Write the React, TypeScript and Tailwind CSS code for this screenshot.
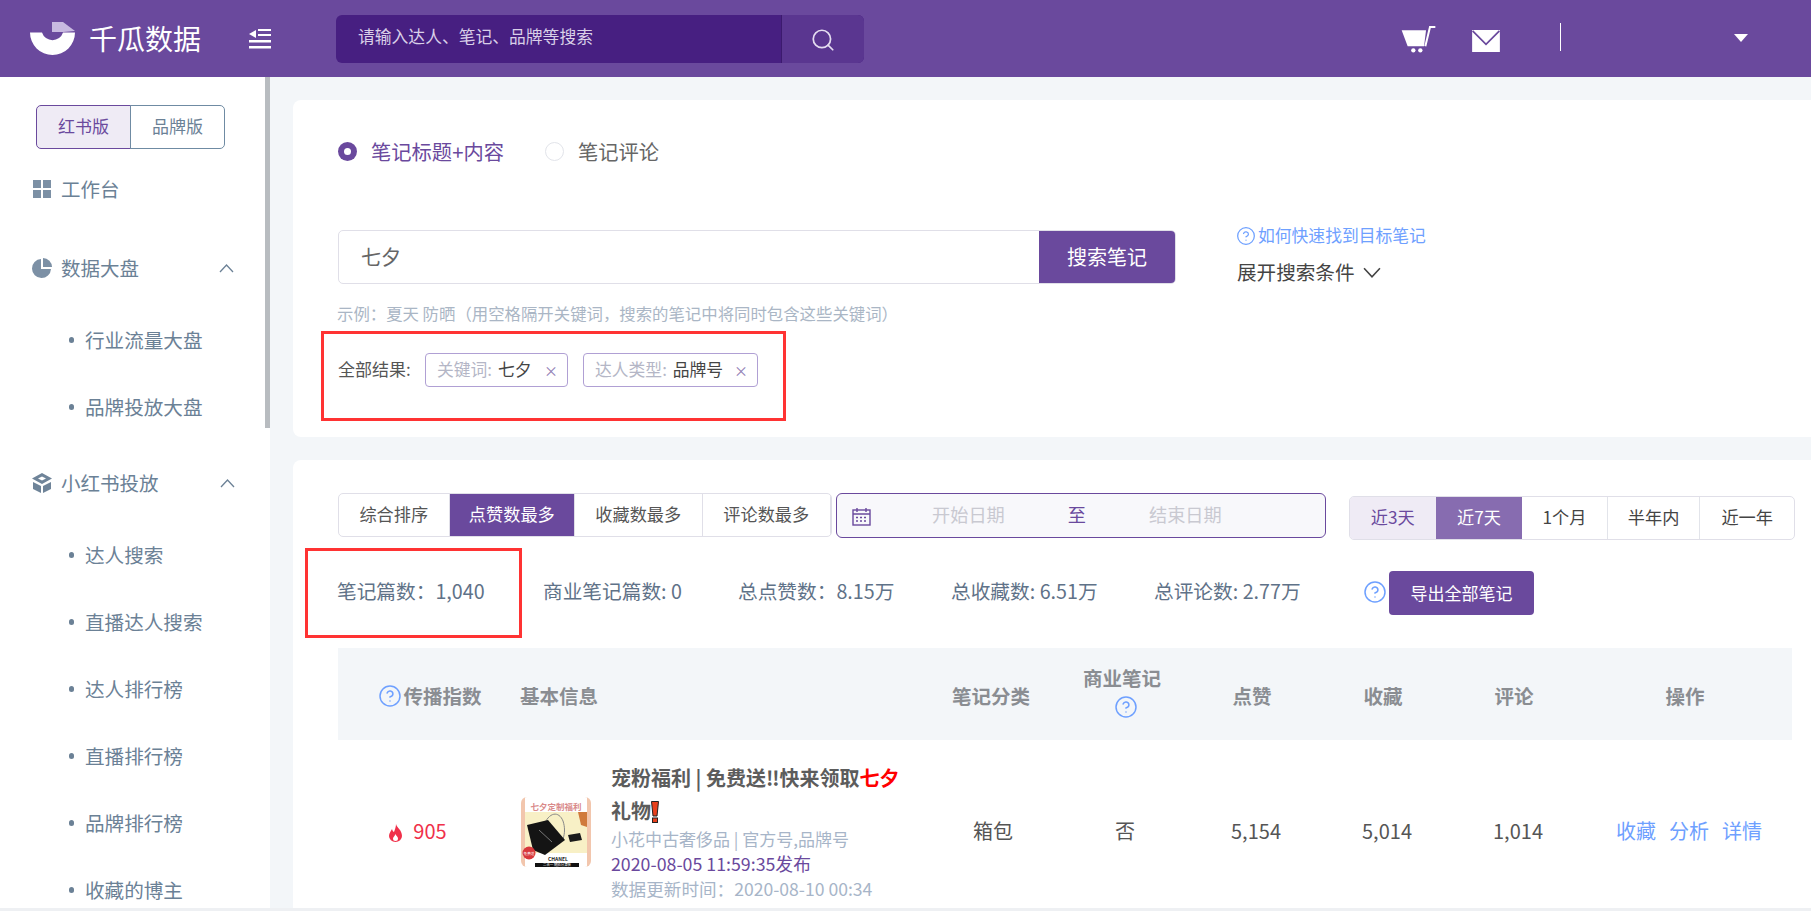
import { CircleHelp, Search } from "lucide-react";

const font = { fontFamily: '"Noto Sans CJK SC", "Noto Sans", sans-serif' };

export default function App() {
  return (
    <div style={font} className="flex h-[911px] w-full flex-col overflow-hidden bg-white">
      <Header />
      <div className="flex h-[831px] min-h-0">
        <Sidebar />
        <main className="flex min-w-0 flex-1 flex-col gap-[23px] overflow-hidden bg-[#f3f6f9] pl-[23px] pt-[23px]">
          <SearchCard />
          <ResultCard />
        </main>
      </div>
      <div className="h-[3px] bg-[#eef0f3]" />
    </div>
  );
}

function Header() {
  return (
    <header className="flex h-[77px] shrink-0 items-center bg-[#6a499d] pl-[30px] pr-[63px] text-white">
      <svg width="45" height="33" viewBox="0 0 45 33" className="mb-[1px]">
        <path d="M0 10.5 A22.5 22.5 0 0 0 45 10.5 L33 10.5 A11 11 0 0 1 12 10.5 Z" fill="#fff" />
        <path d="M22 0 L33 0 L45 9 L33 10 L22 10 Z" fill="#c8b9e0" />
      </svg>
      <span className="mb-[2px] ml-[14px] text-[28px] leading-none">千瓜数据</span>
      <svg width="22" height="20" viewBox="0 0 22 20" className="ml-[48px]" fill="#fff">
        <path d="M0 5 L7 1 L7 9 Z" />
        <rect x="9" y="0" width="13" height="2" />
        <rect x="9" y="5" width="13" height="2" />
        <rect x="0" y="11" width="22" height="2.5" />
        <rect x="0" y="17" width="22" height="2.5" />
      </svg>
      <div className="ml-[65px] flex h-[48px] w-[528px] overflow-hidden rounded-[6px] bg-[#471f81]">
        <div className="flex flex-1 items-center pb-[3px] pl-[22px] text-[16.8px] text-[#d9cfe8]">请输入达人、笔记、品牌等搜索</div>
        <div className="flex w-[83px] items-center justify-center border-l border-[#3c1a6e] bg-[#5a3690]">
          <Search size={26} strokeWidth={1.6} className="mt-[3px] text-[#e4dcf0]" />
        </div>
      </div>
      <div className="ml-auto flex items-center">
        <svg width="35" height="28" viewBox="30 36 105 84" fill="#fff" className="mt-[1px]">
          <path d="M32 52 L105 52 L99 100 L50 100 Z" />
          <path d="M103 100 L117 42 L133 42" fill="none" stroke="#fff" strokeWidth="6" />
          <circle cx="67" cy="112" r="6.5" />
          <circle cx="88" cy="112" r="6.5" />
        </svg>
        <svg width="28" height="22" viewBox="0 0 29 23" className="ml-[36px] mt-[5px]">
          <rect width="29" height="23" fill="#fff" />
          <path d="M0.5 1 L14.5 15 L28.5 1" fill="none" stroke="#6a499d" strokeWidth="1.8" />
        </svg>
        <div className="mb-[3px] ml-[60px] h-[28px] w-px bg-white" />
        <div className="mb-[2px] ml-[173px] h-0 w-0 border-x-[7.5px] border-t-[8px] border-x-transparent border-t-white" />
      </div>
    </header>
  );
}

function Chevron({ className }: { className?: string }) {
  return (
    <svg width="15" height="9" viewBox="0 0 15 9" className={className} fill="none" stroke="currentColor" strokeWidth="1.3">
      <path d="M1 8 L7.5 1 L14 8" />
    </svg>
  );
}

function SubItem({ label }: { label: string }) {
  return (
    <div className="flex h-[67px] items-center pl-[69px] text-[19.6px] text-[#6b8196]">
      <span className="mr-[11px] h-[6px] w-[5px] rounded-full bg-[#6b8196]" />
      {label}
    </div>
  );
}

function Sidebar() {
  return (
    <aside className="relative w-[270px] shrink-0 overflow-hidden bg-white pl-[32px] pt-[28px]">
      <div className="absolute right-0 top-0 h-[351px] w-[5px] bg-[#b8bcc0]" />
      <div className="ml-[4px] flex h-[44px] w-[189px] text-[17px]">
        <div className="flex w-[95px] items-center justify-center rounded-l-[5px] border border-[#6a499d] bg-[#efebf5] pb-[2px] text-[#6a499d]">红书版</div>
        <div className="-ml-px flex w-[95px] items-center justify-center rounded-r-[5px] border border-[#6f8ba3] pb-[2px] text-[#6b8196]">品牌版</div>
      </div>

      <div className="-ml-[32px] pl-[33px]">
        <div className="mt-[6.5px] flex h-[67px] items-center text-[19.5px] text-[#6b8196]">
          <div className="grid h-[18px] w-[18px] grid-cols-2 gap-[2px]">
            <span className="bg-[#7c90a5]" />
            <span className="bg-[#7c90a5]" />
            <span className="bg-[#7c90a5]" />
            <span className="bg-[#7c90a5]" />
          </div>
          <span className="ml-[10px]">工作台</span>
        </div>
        <div className="mt-[12px] flex h-[67px] items-center text-[19.5px] text-[#6b8196]">
          <svg width="20" height="20" viewBox="0 0 20 20" className="-ml-[1px]" fill="#7c90a5">
            <path d="M9 1 L9 11 L19 11 A9.5 9.5 0 1 1 9 1 Z" />
            <path d="M11 0 A9 9 0 0 1 20 9 L11 9 Z" />
          </svg>
          <span className="ml-[9px]">数据大盘</span>
          <Chevron className="ml-[80px] text-[#6b8196]" />
        </div>
      </div>
      <div className="-ml-[32px] mt-[5px]">
        <SubItem label="行业流量大盘" />
        <SubItem label="品牌投放大盘" />
      </div>
      <div className="-ml-[32px] mt-[9px] flex h-[67px] items-center pl-[31px] text-[19.5px] text-[#6b8196]">
        <svg width="22" height="22" viewBox="0 0 22 22" fill="#6f8499">
          <path
            fillRule="evenodd"
            d="M11 1 L21 6.5 L11 12 L1 6.5 Z M11 4.5 L7 6.5 L11 8.5 L15 6.5 Z"
          />
          <path d="M2 10 L10 14 L10 21 L2 17 Z" />
          <path d="M20 10 L12 14 L12 21 L20 17 Z" />
        </svg>
        <span className="ml-[8px]">小红书投放</span>
        <Chevron className="ml-[61px] text-[#6b8196]" />
      </div>
      <div className="-ml-[32px] mt-[5px]">
        <SubItem label="达人搜索" />
        <SubItem label="直播达人搜索" />
        <SubItem label="达人排行榜" />
        <SubItem label="直播排行榜" />
        <SubItem label="品牌排行榜" />
        <SubItem label="收藏的博主" />
      </div>
    </aside>
  );
}

function Tag({ label, value, width }: { label: string; value: string; width: string }) {
  return (
    <div className={`flex h-[34px] items-center whitespace-nowrap rounded-[4px] border border-[#b0a0d4] pl-[11px] text-[16.8px] ${width}`}>
      <span className="text-[#b4b6c6]">{label}</span>
      <span className="ml-[6px] text-[#444]">{value}</span>
      <span className="ml-auto mr-[9px] text-[14px] text-[#8f80b4]">×</span>
    </div>
  );
}

function SearchCard() {
  return (
    <section className="relative h-[337px] shrink-0 rounded-l-[8px] bg-white pl-[45px] pt-[35px]">
      <div className="flex h-[32px] items-center text-[20.3px]">
        <span className="mt-[1px] flex h-[19px] w-[19px] items-center justify-center rounded-full bg-[#6a499d]">
          <span className="h-[7px] w-[7px] rounded-full bg-white" />
        </span>
        <span className="ml-[14px] text-[#6a499d]">笔记标题+内容</span>
        <span className="ml-[41px] mt-[1px] h-[19px] w-[19px] rounded-full border border-[#e2e4ea]" />
        <span className="ml-[14px] text-[#666]">笔记评论</span>
      </div>

      <div className="mt-[63px] flex items-start">
        <div className="flex h-[54px] w-[838px] overflow-hidden rounded-[5px] border border-[#e0dfe8]">
          <div className="flex w-[700px] items-center pl-[22px] text-[20px] text-[#666]">七夕</div>
          <div className="flex flex-1 items-center justify-center bg-[#6a499d] text-[20px] text-white">搜索笔记</div>
        </div>
        <div className="-mt-[4px] ml-[61px]">
          <div className="flex h-[20px] items-center text-[16.8px] text-[#6ea0ff]">
            <CircleHelp size={20} strokeWidth={1.5} className="-ml-[1px]" />
            <span className="ml-[2px]">如何快速找到目标笔记</span>
          </div>
          <div className="mt-[12px] flex h-[28px] items-center text-[19.6px] text-[#444]">
            展开搜索条件
            <Chevron className="ml-[7px] mt-[1px] h-[11px] w-[20px] rotate-180 text-[#444]" />
          </div>
        </div>
      </div>

      <div className="-ml-[1px] mt-[14.5px] h-[24px] whitespace-nowrap text-[16.4px] leading-[24px] text-[#aab6c5]">
        示例：夏天 防晒（用空格隔开关键词，搜索的笔记中将同时包含这些关键词）
      </div>

      <div className="mt-[28.5px] flex items-center">
        <span className="w-[87px] pb-[2px] text-[17px] text-[#555]">全部结果:</span>
        <Tag label="关键词:" value="七夕" width="w-[143px]" />
        <div className="w-[15px]" />
        <Tag label="达人类型:" value="品牌号" width="w-[175px]" />
      </div>

      <div className="absolute left-[28px] top-[231px] h-[90px] w-[465px] border-[3px] border-[#f33]" />
    </section>
  );
}

const sortTabs = [
  { label: "综合排序", width: "w-[111px]", active: false },
  { label: "点赞数最多", width: "w-[126px]", active: true },
  { label: "收藏数最多", width: "w-[128px]", active: false },
  { label: "评论数最多", width: "w-[129px]", active: false },
];

const ranges = [
  { label: "近3天", width: "w-[86px]", cls: "bg-[#efebf5] text-[#6a499d]" },
  { label: "近7天", width: "w-[87px]", cls: "bg-[#876cb0] text-white" },
  { label: "1个月", width: "w-[86px]", cls: "border-r border-[#e2e4ea] text-[#444]" },
  { label: "半年内", width: "w-[93px]", cls: "border-r border-[#e2e4ea] text-[#444]" },
  { label: "近一年", width: "w-[94px]", cls: "text-[#444]" },
];

function Toolbar() {
  return (
    <div className="flex items-start text-[17.2px]">
      <div className="flex h-[44px] w-[494px] overflow-hidden rounded-[5px] border border-[#e0dfe8]">
        {sortTabs.map((t) => (
          <div
            key={t.label}
            className={`flex items-center justify-center border-r border-[#e0dfe8] pb-[2px] ${t.width} ${t.active ? "bg-[#6a499d] text-white" : "text-[#555]"}`}
          >
            {t.label}
          </div>
        ))}
      </div>
      <div className="ml-[4px] flex h-[45px] w-[490px] items-center rounded-[6px] border-[1.5px] border-[#6a499d] bg-[#f8f8fb] pl-[15px] text-[18.2px]">
        <svg width="19" height="19" viewBox="0 0 19 19" fill="none" stroke="#6a499d" strokeWidth="1.4" className="mt-[1px]">
          <rect x="1" y="3" width="17" height="15" />
          <path d="M1 7 H18 M5 1 V5 M14 1 V5" />
          <path d="M4 10.5 H7 M8 10.5 H11 M12 10.5 H15 M4 14 H7 M8 14 H11 M12 14 H15" strokeDasharray="2 1" />
        </svg>
        <span className="mb-[2px] ml-[61px] text-[#c9c9d1]">开始日期</span>
        <span className="mb-[2px] ml-[63px] text-[#6a499d]">至</span>
        <span className="mb-[2px] ml-[63px] text-[#c9c9d1]">结束日期</span>
      </div>
      <div className="ml-[23px] mt-[3px] flex h-[44px] w-[446px] overflow-hidden rounded-[5px] border border-[#e0dfe8]">
        {ranges.map((r) => (
          <div key={r.label} className={`flex items-center justify-center pb-[2px] ${r.width} ${r.cls}`}>
            {r.label}
          </div>
        ))}
      </div>
    </div>
  );
}

function Stats() {
  return (
    <div className="-ml-[1px] mt-[31px] flex h-[44px] items-center text-[19.7px] text-[#5f7288]">
      <span className="w-[206px] pb-[4px]">笔记篇数：1,040</span>
      <span className="w-[195px] pb-[4px]">商业笔记篇数: 0</span>
      <span className="w-[213px] pb-[4px]">总点赞数：8.15万</span>
      <span className="w-[203px] pb-[4px]">总收藏数: 6.51万</span>
      <span className="w-[209px] pb-[4px]">总评论数: 2.77万</span>
      <CircleHelp size={24} strokeWidth={1.5} className="mb-[2px] text-[#6ea0ff]" />
      <div className="ml-[2px] flex h-[44px] w-[145px] items-center justify-center rounded-[4px] bg-[#6a499d] pb-[1px] text-[17px] text-white">
        导出全部笔记
      </div>
    </div>
  );
}

const gridCols = "grid grid-cols-[182px_388px_166px_96px_164px_98px_164px_178px_18px]";

function TableHead() {
  return (
    <div className={`${gridCols} mt-[33px] h-[92px] w-[1454px] items-center bg-[#f3f6f9] pt-[4px] text-center text-[19.5px] font-bold text-[#8a8d92]`}>
      <div className="flex items-center justify-center pl-[2px]">
        <CircleHelp size={24} strokeWidth={1.5} className="mr-[1px] text-[#6ea0ff]" />
        传播指数
      </div>
      <div className="text-left">基本信息</div>
      <div>笔记分类</div>
      <div className="-mt-[11px]">
        <div className="leading-[32px]">商业笔记</div>
        <CircleHelp size={24} strokeWidth={1.5} className="mx-auto mt-[1px] translate-x-[4px] text-[#6ea0ff]" />
      </div>
      <div>点赞</div>
      <div>收藏</div>
      <div>评论</div>
      <div>操作</div>
    </div>
  );
}

function Thumb() {
  return (
    <svg width="70" height="70" viewBox="0 0 70 70" className="ml-[1px] shrink-0 rounded-[6px]">
      <rect width="70" height="70" fill="#f2c6ad" />
      <rect x="4" width="62" height="15" fill="#fff" />
      <rect x="4" y="15" width="62" height="41" fill="#f8f0c6" />
      <rect x="4" y="56" width="62" height="14" fill="#fff" />
      <text x="35" y="13" textAnchor="middle" fontSize="8.5" fontWeight="700" fill="#d98a8a">七夕定制福利</text>
      <path d="M57 15 L66 15 L66 30 L60 28 Z" fill="#d07a3c" />
      <path d="M22 30 C28 14 38 14 42 24 C44 30 44 36 42 42" fill="none" stroke="#888" strokeWidth="1" />
      <path d="M6 28 L27 23 L44 43 L24 58 L12 53 Z" fill="#141414" />
      <path d="M18 33 L31 45" stroke="#777" strokeWidth="1" />
      <path d="M47 38 L59 36 L61 43 L49 45 Z" fill="#1a1a1a" />
      <circle cx="8" cy="56" r="6.5" fill="#d8383c" />
      <text x="8" y="57.5" textAnchor="middle" fontSize="3.6" fill="#fff">免费送</text>
      <text x="37" y="64" textAnchor="middle" fontSize="5" fontWeight="700" fill="#222">CHANEL</text>
      <rect x="14" y="66" width="44" height="4" fill="#111" />
      <text x="36" y="69.3" textAnchor="middle" fontSize="3.4" fill="#fff">二合一 随拍分清装</text>
    </svg>
  );
}

function NoteRow() {
  return (
    <div className={`${gridCols} h-[184px] w-[1454px] items-center text-center text-[20px] text-[#555]`}>
      <div className="flex items-center justify-center pr-[22px] text-[#f0304a]">
        <svg width="13" height="18" viewBox="0 0 13 18" className="mr-[11px] mt-[1px]">
          <path d="M7 0 C8 4 13 6 13 12 A6.5 6 0 0 1 0 12 C0 9 2 7 3 5 C3.5 7 4.5 8 5 8 C6 5 7 3 7 0 Z" fill="#f0304a" />
          <path d="M6.5 10 C7 12 9 12.5 9 14.5 A2.5 2.5 0 0 1 4 14.5 C4 13 6 12 6.5 10 Z" fill="#fff" />
        </svg>
        <span className="mb-[2px]">905</span>
      </div>
      <div className="flex items-center text-left">
        <Thumb />
        <div className="-mt-[2px] ml-[20px] min-w-0 whitespace-nowrap">
          <div className="text-[20px] font-bold leading-[33px] text-[#5c5c5c]">
            宠粉福利 | 免费送‼快来领取<span className="text-[#f00]">七夕</span>
            <br />
            礼物
            <svg width="8" height="22" viewBox="0 0 8 22" className="inline-block align-[-4px]">
              <path d="M0.5 0.5 H7.5 L6 15 H2 Z" fill="#e8401c" stroke="#222" strokeWidth="1" />
              <rect x="1.5" y="17" width="5" height="4.5" fill="#e8401c" stroke="#222" strokeWidth="1" />
            </svg>
          </div>
          <div className="text-[17px] leading-[24px] text-[#a7b5c8]">小花中古奢侈品 | 官方号,品牌号</div>
          <div className="text-[17.8px] leading-[24.5px] text-[#6a499d]">2020-08-05 11:59:35发布</div>
          <div className="text-[17.6px] leading-[25px] text-[#a7b5c8]">数据更新时间：2020-08-10 00:34</div>
        </div>
      </div>
      <div className="pb-[2px] pl-[4px]">箱包</div>
      <div className="pb-[2px] pl-[6px]">否</div>
      <div className="pb-[2px] pl-[8px]">5,154</div>
      <div className="pb-[2px] pl-[8px]">5,014</div>
      <div className="pb-[2px] pl-[8px]">1,014</div>
      <div className="flex justify-center gap-[13px] pb-[2px] pl-[8px] text-[#6ea0ff]">
        <span>收藏</span>
        <span>分析</span>
        <span>详情</span>
      </div>
    </div>
  );
}

function ResultCard() {
  return (
    <section className="relative flex-1 rounded-tl-[8px] bg-white pl-[45px] pt-[33px]">
      <Toolbar />
      <Stats />
      <TableHead />
      <NoteRow />
      <div className="absolute left-[12px] top-[88px] h-[90px] w-[217px] border-[3px] border-[#f33]" />
    </section>
  );
}
